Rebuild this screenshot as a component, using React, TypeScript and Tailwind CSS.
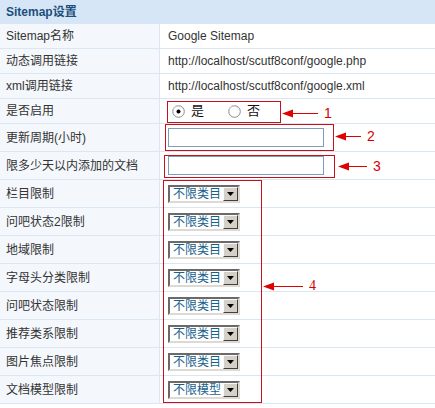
import React from "react";

const FONT = '"Liberation Sans", "Noto Sans CJK SC", Arial, sans-serif';

type Row = { label: string; kind: "text" | "radio" | "input" | "select"; value?: string; tall?: boolean };

const rows: Row[] = [
  { label: "Sitemap名称", kind: "text", value: "Google Sitemap" },
  { label: "动态调用链接", kind: "text", value: "http://localhost/scutf8conf/google.php" },
  { label: "xml调用链接", kind: "text", value: "http://localhost/scutf8conf/google.xml" },
  { label: "是否启用", kind: "radio" },
  { label: "更新周期(小时)", kind: "input", tall: true },
  { label: "限多少天以内添加的文档", kind: "input", tall: true },
  { label: "栏目限制", kind: "select", value: "不限类目", tall: true },
  { label: "问吧状态2限制", kind: "select", value: "不限类目", tall: true },
  { label: "地域限制", kind: "select", value: "不限类目", tall: true },
  { label: "字母头分类限制", kind: "select", value: "不限类目", tall: true },
  { label: "问吧状态限制", kind: "select", value: "不限类目", tall: true },
  { label: "推荐类系限制", kind: "select", value: "不限类目", tall: true },
  { label: "图片焦点限制", kind: "select", value: "不限类目", tall: true },
  { label: "文档模型限制", kind: "select", value: "不限模型", tall: true },
];

function Radio({ checked }: { checked?: boolean }) {
  return (
    <svg width="13" height="13" viewBox="0 0 13 13" className="shrink-0">
      <circle cx="6.5" cy="6.5" r="5.8" fill="#fff" stroke="#8a8a8a" strokeWidth="1" />
      <path d="M2.4 9.6 A5 5 0 0 1 9.6 2.4" fill="none" stroke="#c8c8c8" strokeWidth="1" />
      {checked && <circle cx="6.5" cy="6.5" r="2" fill="#000" />}
    </svg>
  );
}

function Select({ value }: { value: string }) {
  return (
    <div className="flex h-[18px] w-[72px] border-2 border-t-[#6a6a6a] border-l-[#6a6a6a] border-b-[#dedad2] border-r-[#dedad2] bg-white">
      <div className="flex-1 pl-[3px] text-[12px] leading-[14px] text-[#17608c]">{value}</div>
      <div className="flex h-[14px] w-[15px] items-center justify-center border border-t-[#fafafa] border-l-[#fafafa] border-b-[#404040] border-r-[#404040] bg-[#d4d0c8]">
        <svg width="7" height="4" viewBox="0 0 7 4">
          <path d="M0 0 H7 L3.5 4 Z" fill="#000" />
        </svg>
      </div>
    </div>
  );
}

function Arrow({ left, top, len, num, serif }: { left: number; top: number; len: number; num: string; serif?: boolean }) {
  return (
    <div className="absolute flex items-center" style={{ left, top }}>
      <svg width={len} height="9" viewBox={`0 0 ${len} 9`}>
        <path d="M0 4.5 L11 0.5 L11 8.5 Z" fill="#e00000" />
        <line x1="10" y1="4.5" x2={len} y2="4.5" stroke="#e00000" strokeWidth="1" />
      </svg>
      <span
        className="ml-[6px] text-[14px] leading-[14px] text-[#d40000]"
        style={{ fontFamily: serif ? '"Liberation Serif", serif' : '"Liberation Sans", sans-serif' }}
      >
        {num}
      </span>
    </div>
  );
}

export default function App() {
  return (
    <div className="relative h-[408px] w-[435px] overflow-hidden bg-white" style={{ fontFamily: FONT }}>
      <div className="flex h-[24px] items-center bg-[#d6e6f6] pl-[6px] text-[12px] font-bold text-[#1c4f7c]">
        Sitemap设置
      </div>
      {rows.map((r, i) => (
        <div
          key={i}
          className={`flex border-b border-[#dae7f3] ${r.tall ? "h-[28px]" : "h-[25px]"}`}
        >
          <div className="flex w-[160px] shrink-0 items-center border-r border-[#dae7f3] bg-[#f4f8fc] pl-[6px] text-[12px] text-[#333]">
            {r.label}
          </div>
          <div className="flex flex-1 items-center pl-[8px] text-[12px] text-[#333]">
            {r.kind === "text" && <span>{r.value}</span>}
            {r.kind === "radio" && (
              <div className="flex items-center pl-[4px]">
                <Radio checked />
                <span className="ml-[6px] text-[13px] text-[#111]">是</span>
                <span className="ml-[24px]" />
                <Radio />
                <span className="ml-[6px] text-[13px] text-[#111]">否</span>
              </div>
            )}
            {r.kind === "input" && (
              <div className="h-[19px] w-[156px] border border-[#7f9db9] bg-white" />
            )}
            {r.kind === "select" && <Select value={r.value!} />}
          </div>
        </div>
      ))}

      {/* red annotation frames */}
      <div className="absolute left-[167px] top-[101px] h-[22px] w-[114px] border border-[#c8101a]" />
      <div className="absolute left-[165px] top-[124px] h-[27px] w-[169px] border border-[#c8101a]" />
      <div className="absolute left-[164px] top-[155px] h-[23px] w-[171px] border border-[#c8101a]" />
      <div className="absolute left-[163px] top-[180px] h-[223px] w-[99px] border border-[#c8101a]" />

      <Arrow left={282} top={106} len={36} num="1" />
      <Arrow left={335} top={129} len={26} num="2" />
      <Arrow left={338} top={159} len={29} num="3" />
      <Arrow left={263} top={279} len={40} num="4" serif />
    </div>
  );
}
